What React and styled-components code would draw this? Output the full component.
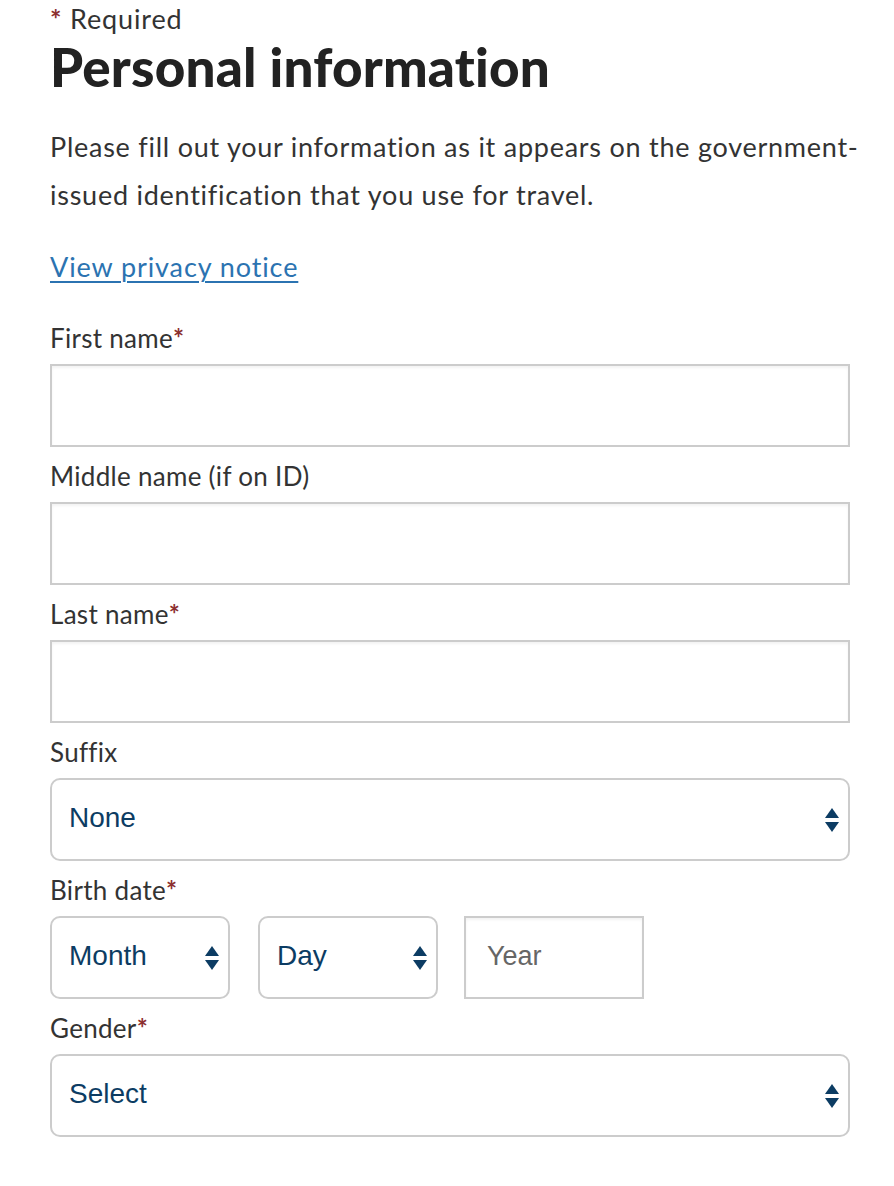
import React from 'react';
import styled, { createGlobalStyle } from 'styled-components';

//***Colors***/
const text = '#333333';
const heading = '#222222';
const required = '#8c2f2f';
const link = '#2b73b1';
const navy = '#0c3c63';
const border = '#cccccc';

const GlobalStyle = createGlobalStyle`
    body {
        margin: 0;
        background: #fff;
        font-family: Lato, 'Noto Sans', sans-serif;
        color: ${text};
    }
`;

const Page = styled.div`
    width: 800px;
    padding: 0 0 40px 50px;
`;

const RequiredNote = styled.div`
    font-size: 27px;
    line-height: 30px;
    letter-spacing: 0.85px;
    padding-top: 4px;
    color: ${text};
`;

const Star = styled.span`
    color: ${required};
    font-weight: bold;
`;

const Title = styled.h1`
    margin: 3px 0 0;
    font-size: 53px;
    line-height: 60px;
    font-weight: 900;
    letter-spacing: 0.2px;
    color: ${heading};
`;

const Intro = styled.p`
    width: 840px;
    margin: 26px 0 0;
    font-size: 27px;
    line-height: 48px;
    letter-spacing: 0.75px;
    white-space: nowrap;
    color: ${text};
`;

const PrivacyLink = styled.a`
    display: inline-block;
    margin-top: 33px;
    font-size: 27px;
    line-height: 30px;
    letter-spacing: 0.9px;
    color: ${link};
    text-decoration: underline;
    text-decoration-thickness: 2px;
    text-underline-offset: 4px;
`;

const Form = styled.div`
    margin-top: 41px;
    display: flex;
    flex-direction: column;
`;

const Field = styled.div`
    display: flex;
    flex-direction: column;
    margin-bottom: 14px;
`;

const Label = styled.label`
    font-size: 26px;
    line-height: 30px;
    letter-spacing: 0.3px;
    margin-bottom: 11px;
    color: ${text};
`;

const TextBox = styled.div`
    box-sizing: border-box;
    width: ${p => p.width || '800px'};
    height: 83px;
    margin-left: ${p => p.offset || '0'};
    border: 2px solid ${border};
    box-shadow: inset 0 2px 3px rgba(0,0,0,0.05);
    background: #fff;
    display: flex;
    align-items: center;
    padding: 0 0 2px 21px;
    font-family: 'Liberation Sans', Arial, sans-serif;
    font-size: 27px;
    color: #666;
`;

const SelectBox = styled.div`
    box-sizing: border-box;
    width: ${p => p.width || '800px'};
    height: 83px;
    border: 2px solid ${border};
    border-radius: 10px;
    background: #fff;
    display: flex;
    align-items: center;
    justify-content: space-between;
    padding: 0 8px 0 17px;
    font-family: 'Liberation Sans', Arial, sans-serif;
    font-size: 28px;
    color: ${navy};
`;

const SelectValue = styled.span`
    padding-bottom: 4px;
`;

const DateRow = styled.div`
    display: flex;
    gap: 28px;
`;

const Arrows = () => (
    <svg width="16" height="26" viewBox="0 0 16 26">
        <polygon points="8,1 15,11 1,11" fill={navy} />
        <polygon points="1,15 15,15 8,25" fill={navy} />
    </svg>
);

const Select = ({ value, width }) => (
    <SelectBox width={width}>
        <SelectValue>{value}</SelectValue>
        <Arrows />
    </SelectBox>
);

export default function App() {
    return (
        <Page>
            <GlobalStyle />
            <RequiredNote><Star>*</Star> Required</RequiredNote>
            <Title>Personal information</Title>
            <Intro>
                Please fill out your information as it appears on the government-<br />
                issued identification that you use for travel.
            </Intro>
            <PrivacyLink href="#">View privacy notice</PrivacyLink>
            <Form>
                <Field>
                    <Label>First name<Star>*</Star></Label>
                    <TextBox />
                </Field>
                <Field>
                    <Label>Middle name (if on ID)</Label>
                    <TextBox />
                </Field>
                <Field>
                    <Label>Last name<Star>*</Star></Label>
                    <TextBox />
                </Field>
                <Field>
                    <Label>Suffix</Label>
                    <Select value="None" />
                </Field>
                <Field>
                    <Label>Birth date<Star>*</Star></Label>
                    <DateRow>
                        <Select value="Month" width="180px" />
                        <Select value="Day" width="180px" />
                        <TextBox width="180px" offset="-2px">Year</TextBox>
                    </DateRow>
                </Field>
                <Field>
                    <Label>Gender<Star>*</Star></Label>
                    <Select value="Select" />
                </Field>
            </Form>
        </Page>
    );
}
